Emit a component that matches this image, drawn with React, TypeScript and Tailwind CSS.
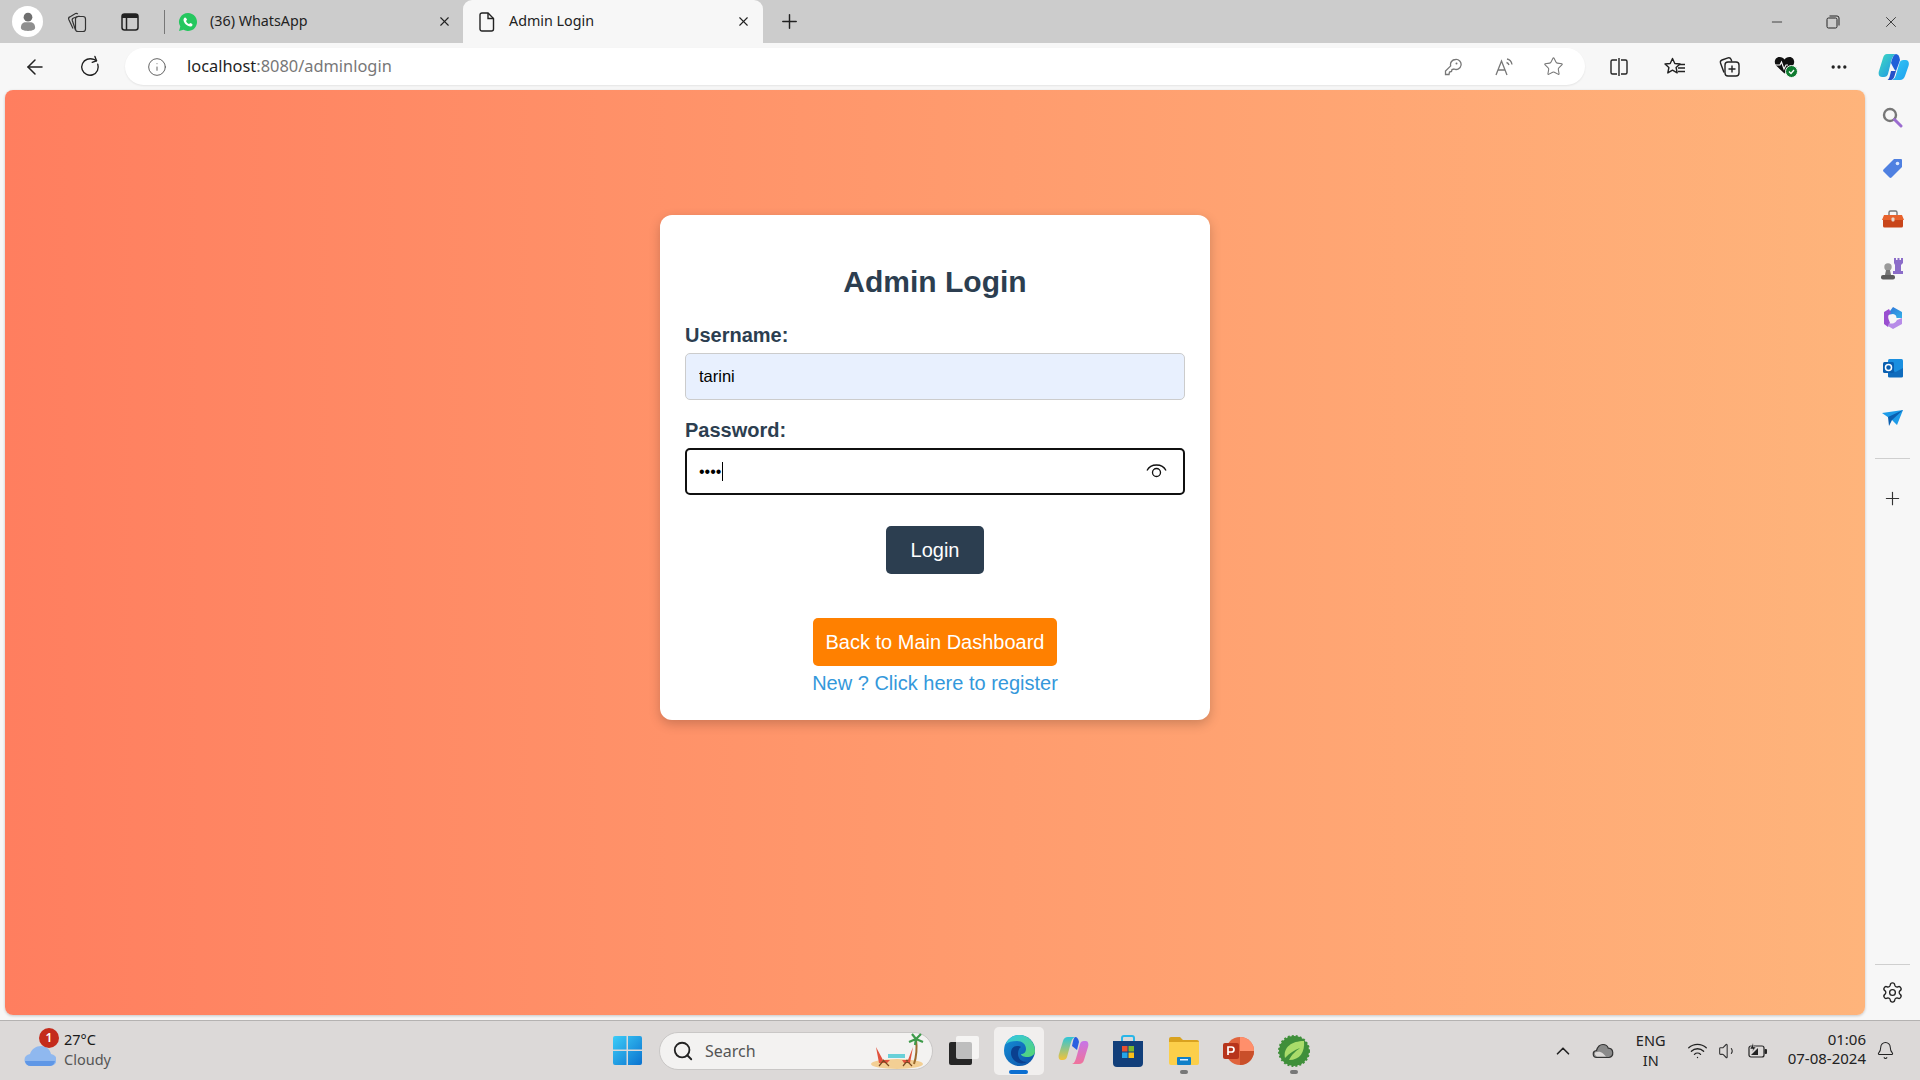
import React from "react";
import { ArrowLeft, RotateCw, Info, X, Plus, Minus, Star, Settings, Bell, ChevronUp, Search, Wifi, Volume1, MoreHorizontal } from "lucide-react";

const ui = "font-['Noto_Sans','Open_Sans',sans-serif]";

function Avatar() {
  return (
    <div className="w-[31px] h-[31px] rounded-full bg-white flex items-center justify-center">
      <svg width="16" height="19" viewBox="0 0 20 24">
        <circle cx="10" cy="6.500" r="5.500" fill="#6f6f6f" />
        <path d="M1 20c0-5 3-7 6-7h6c3 0 6 2 6 7 0 2-3 4-9 4s-9-2-9-4z" fill="#8f8f8f" />
      </svg>
    </div>
  );
}
function Workspaces() {
  return (
    <svg width="22" height="22" viewBox="0 0 22 22" fill="none" stroke="#333" strokeWidth="1.200">
      <rect x="9.500" y="5.500" width="10" height="15" rx="2.500" />
      <path d="M9.500 19L6.300 9.500a2 2 0 011.300-2.500L13.500 5" />
      <path d="M7 17.500L2.800 8.500a2 2 0 011-2.600L9.500 2.500a2 2 0 012.300.7" />
    </svg>
  );
}
function TabActions() {
  return (
    <svg width="20" height="20" viewBox="0 0 20 20" fill="none">
      <rect x="2" y="2" width="16" height="16" rx="2.500" stroke="#222" strokeWidth="1.500" />
      <path d="M2 4.500A2.500 2.500 0 014.500 2h11A2.500 2.500 0 0118 4.500V6H2z" fill="#222" />
      <path d="M6.500 6v12" stroke="#222" strokeWidth="1.500" />
    </svg>
  );
}
function WhatsApp() {
  return (
    <svg width="20" height="20" viewBox="0 0 20 20">
      <path d="M10 1a9 9 0 00-7.700 13.600L1 19l4.500-1.200A9 9 0 1010 1z" fill="#25c75f" />
      <path d="M7 5.500c-.5 0-1.500 1-1.500 2.300 0 3 3.500 6.700 6.800 6.700 1.300 0 2.300-1 2.300-1.800 0-.6-1.900-1.700-2.300-1.700-.4 0-.8 1-1.200 1-.9 0-3-2-3-3 0-.4.900-.8.900-1.200 0-.5-1-2.300-2-2.300z" fill="#fff" />
    </svg>
  );
}
function Doc() {
  return (
    <svg width="16" height="20" viewBox="0 0 16 20" fill="none" stroke="#222" strokeWidth="1.400">
      <path d="M3 1h6l5.500 5.500V17a2 2 0 01-2 2H3a2 2 0 01-2-2V3a2 2 0 012-2z" />
      <path d="M9 1v5.500h5.500" />
    </svg>
  );
}
function Restore() {
  return (
    <svg width="14" height="14" viewBox="0 0 14 14" fill="none" stroke="#222" strokeWidth="1">
      <rect x="1" y="3" width="10" height="10" rx="1.500" />
      <path d="M3.500 1H11a2 2 0 012 2v7.500" />
    </svg>
  );
}
function KeyIcon() {
  return (
    <svg width="18" height="18" viewBox="0 0 18 18" fill="none" stroke="#777" strokeWidth="1.300">
      <path d="M11.500 1.500a5 5 0 00-4.800 6.400L1.500 13v3.500H5l.5-2.500 2-.5.5-2 2-.5a5 5 0 101.500-9.500z" />
      <circle cx="12.500" cy="5.500" r="1" fill="#777" stroke="none" />
    </svg>
  );
}
function ReadAloud() {
  return (
    <svg width="20" height="18" viewBox="0 0 20 18" fill="none" stroke="#777" strokeWidth="1.300">
      <path d="M1 17L6.500 3 12 17M3 12h7" />
      <path d="M11.500 4.500c1.500.3 2 1 2.500 2.500M12 1c3 .5 4.500 2.500 5 5.500" />
    </svg>
  );
}
function SplitScreen() {
  return (
    <svg width="20" height="20" viewBox="0 0 20 20" fill="none" stroke="#222" strokeWidth="1.400">
      <path d="M8 3H3.500A1.500 1.500 0 002 4.500v11A1.500 1.500 0 003.500 17H8M12 3h4.500A1.500 1.500 0 0118 4.500v11a1.500 1.500 0 01-1.500 1.500H12M10 1v18" />
    </svg>
  );
}
function Favorites() {
  return (
    <svg width="22" height="20" viewBox="0 0 22 20" fill="none" stroke="#222" strokeWidth="1.400">
      <path d="M8.500 1.500l2.300 5 5.200.5-3.900 3.500 1.100 5.400-4.700-2.800-4.700 2.800 1.100-5.400L1 7l5.200-.5z" strokeLinejoin="round" />
      <path d="M15 7.500h6M14 11h7M14 14.500h7" />
    </svg>
  );
}
function Collections() {
  return (
    <svg width="21" height="21" viewBox="0 0 21 21" fill="none" stroke="#222" strokeWidth="1.400">
      <rect x="6" y="6" width="14" height="14" rx="3" />
      <path d="M13 9.500v7M9.500 13h7" />
      <path d="M5 16.500L1.500 7A2.500 2.500 0 013 4l6-2.200a2.500 2.500 0 013 1.500l.8 2.200" />
    </svg>
  );
}
function Health() {
  return (
    <svg width="24" height="23" viewBox="0 0 24 23">
      <path d="M10.500 18.500L2 10.500C-.5 7.500 1 2 5.500 2c2.500 0 4 1 5 2.500C11.500 3 13 2 15.500 2c4.500 0 6 5.500 3.500 8.500z" fill="#111" />
      <path d="M1 10h5l1.500-3 2.500 7 2-4h2" stroke="#fff" strokeWidth="1.100" fill="none" />
      <circle cx="17.500" cy="16.500" r="6" fill="#0f7b30" stroke="#f7f7f7" strokeWidth="1" />
      <path d="M15 16.500l2 2 3-3.500" stroke="#fff" strokeWidth="1.300" fill="none" />
    </svg>
  );
}
function CopilotLogo() {
  return (
    <svg width="31" height="26" viewBox="0 0 31 26">
      <defs>
        <linearGradient id="cpa" x1="0" y1="0" x2="1" y2="1">
          <stop offset="0" stopColor="#3fdcc0" />
          <stop offset="1" stopColor="#1f8fe8" />
        </linearGradient>
        <linearGradient id="cpb" x1="0" y1="0" x2="1" y2="1">
          <stop offset="0" stopColor="#36c8f5" />
          <stop offset="1" stopColor="#1fa0ee" />
        </linearGradient>
      </defs>
      <path d="M9 0h9c-3 1-4 4-5 8l-3 12c-.5 2-2 3-4 3H4c-3 0-4-3-3-6L5 4c.8-2.500 2-4 4-4z" fill="url(#cpa)" />
      <path d="M14 26h8c2.500 0 4-1.500 5-4l3.500-10c1-3 0-6-3-6h-2c-2 0-3.500 1-4 3l-3 10c-1 4-2 6-4.500 7z" fill="url(#cpb)" />
      <path d="M18 0c2 0 3.500 2 4 6l-1 3-3 8c-1 0-3-4-5-8 1-4 2-8 5-9z" fill="#1f5fd8" />
      <path d="M13 17l5 0-1.500 5c-.5 2-1.500 3-3 4h-4c2-1 2.500-5 3.500-9z" fill="#2450c8" />
    </svg>
  );
}

function TagIcon() {
  return (
    <svg width="20" height="20" viewBox="0 0 20 20">
      <path d="M11 1h7a1 1 0 011 1v7L8.500 19.500a1.500 1.500 0 01-2 0L.5 13.500a1.500 1.500 0 010-2z" fill="#4f80e1" />
      <circle cx="14.500" cy="5.500" r="1.800" fill="#dce8ff" />
    </svg>
  );
}
function Briefcase() {
  return (
    <svg width="22" height="18" viewBox="0 0 22 18">
      <path d="M7 5V2.500A1.500 1.500 0 018.500 1h5A1.500 1.500 0 0115 2.500V5" fill="none" stroke="#777" strokeWidth="1.400" />
      <path d="M2 5h18l2 5H0z" fill="#e8622c" />
      <path d="M1 10h20v6a1.500 1.500 0 01-1.500 1.500h-17A1.500 1.500 0 011 16z" fill="#c8451a" />
      <rect x="9.500" y="7.500" width="3" height="4" rx="1" fill="#e6d6cc" />
    </svg>
  );
}
function Chess() {
  return (
    <svg width="23" height="23" viewBox="0 0 23 23">
      <path d="M13 1h2v2h1.500V1h2v2H20V1h2v5l-2 2v6h2v3H12v-3h2V8l-1-2z" fill="#8b6cc9" />
      <circle cx="7" cy="10" r="3.700" fill="#9a9a9a" />
      <path d="M5 13h4l1 5H4z" fill="#777" />
      <rect x="0" y="18" width="14" height="4.500" rx="2" fill="#5c5c5c" />
    </svg>
  );
}
function M365() {
  return (
    <svg width="20" height="22" viewBox="0 0 20 22">
      <defs>
        <linearGradient id="ma" x1="0" y1="0" x2="1" y2="1">
          <stop offset="0" stopColor="#2f6fd8" />
          <stop offset="1" stopColor="#33b1e8" />
        </linearGradient>
      </defs>
      <path d="M10 0l9 5v6h-5.500A4 4 0 0010 7L4 8z" fill="url(#ma)" />
      <path d="M1 5l5-3 2 4a5 5 0 00-2.500 6L7 16l-2 4-4-3z" fill="#9a4fd0" />
      <path d="M6 16a6 6 0 008-3l5-2v6l-9 5-5-3z" fill="#b78ce8" />
    </svg>
  );
}
function Outlook() {
  return (
    <svg width="20" height="20" viewBox="0 0 20 20">
      <rect x="5" y="1" width="15" height="18" rx="1.500" fill="#1a8fe0" />
      <path d="M5 10l7.500 4L20 10v8a1.500 1.500 0 01-1.500 1.500h-12A1.500 1.500 0 015 18z" fill="#0f6cbd" />
      <rect x="0" y="4" width="11" height="11" rx="1.500" fill="#0a5fb0" />
      <circle cx="5.500" cy="9.500" r="3" fill="none" stroke="#fff" strokeWidth="1.500" />
    </svg>
  );
}
function Send() {
  return (
    <svg width="21" height="16" viewBox="0 0 21 16">
      <path d="M0 3l21-3-6 15-5-5z" fill="#1d9be8" />
      <path d="M6 7l15-7-11 10-3 6z" fill="#0b5fb0" />
    </svg>
  );
}
function Sidebar() {
  return (
    <div className="w-[55px] flex flex-col items-center">
      <div className="h-[14px]" />
      <div className="h-[26px] flex items-center justify-center pr-[2px]">
        <svg width="22" height="22" viewBox="0 0 22 22">
          <circle cx="9" cy="9" r="6" fill="none" stroke="#777" strokeWidth="2.400" />
          <path d="M13.500 13.500L20 20" stroke="#9b6ccf" strokeWidth="3" strokeLinecap="round" />
        </svg>
      </div>
      <div className="h-[25px]" />
      <div className="h-[26px] flex items-center justify-center"><TagIcon /></div>
      <div className="h-[25px]" />
      <div className="h-[26px] flex items-center justify-center"><Briefcase /></div>
      <div className="h-[23px]" />
      <div className="h-[26px] flex items-center justify-center"><Chess /></div>
      <div className="h-[24px]" />
      <div className="h-[26px] flex items-center justify-center"><M365 /></div>
      <div className="h-[24px]" />
      <div className="h-[26px] flex items-center justify-center"><Outlook /></div>
      <div className="h-[24px]" />
      <div className="h-[26px] flex items-center justify-center"><Send /></div>
      <div className="w-[35px] h-px bg-[#cfcfcf] mt-[27px]" />
      <div className="mt-[29px]"><Plus size={21} strokeWidth={1.300} color="#333" /></div>
      <div className="flex-1" />
      <div className="w-[35px] h-px bg-[#cfcfcf]" />
      <div className="mt-[16px] mb-[16px]"><Settings size={23} strokeWidth={1.400} color="#222" /></div>
    </div>
  );
}

function Card() {
  return (
    <div className="w-[550px] h-[505px] bg-white rounded-[12px] shadow-[0_4px_12px_rgba(0,0,0,0.2)] px-[25px] pt-[49px] font-['Liberation_Sans',Arial,sans-serif] flex flex-col items-stretch">
      <h2 className="text-[30px] leading-[36px] font-bold text-[#2c3e50] text-center">Admin Login</h2>
      <label className="mt-[24px] text-[20px] leading-[23px] font-bold text-[#2c3e50]">Username:</label>
      <input readOnly value="tarini" className="mt-[6px] h-[47px] w-full rounded-[5px] border border-[#cccccc] bg-[#e8f0fe] px-[13px] text-[16.500px] text-black outline-none" />
      <label className="mt-[19px] text-[20px] leading-[23px] font-bold text-[#2c3e50]">Password:</label>
      <div className="relative mt-[6px]">
        <input readOnly type="password" value="1234" className="h-[47px] w-full rounded-[5px] border-2 border-[#101010] bg-white px-[12px] text-[16px] text-black outline-none" />
        <span className="absolute left-[37px] top-[14px] w-px h-[19px] bg-black" />
        <svg className="absolute right-[18px] top-[15px]" width="21" height="17" viewBox="0 0 21 17" fill="none" stroke="#111" strokeWidth="1.300">
          <path d="M1 7.500C3 3.500 6.500 2 10.500 2s7.500 1.500 9.500 5.500" />
          <circle cx="10.500" cy="9.500" r="4" />
        </svg>
      </div>
      <button className="mt-[31px] self-center h-[48px] w-[98px] rounded-[5px] bg-[#2c3e50] text-white text-[20px]">Login</button>
      <button className="mt-[44px] self-center h-[48px] w-[244px] rounded-[5px] bg-[#ff8000] text-white text-[20px]">Back to Main Dashboard</button>
      <a className="mt-[3px] self-center text-[20px] leading-[29px] text-[#3498db]">New ? Click here to register</a>
    </div>
  );
}

function Windows() {
  return (
    <svg width="29" height="29" viewBox="0 0 29 29">
      <defs>
        <linearGradient id="wa" x1="0" y1="0" x2="1" y2="1">
          <stop offset="0" stopColor="#3ccdf8" />
          <stop offset="1" stopColor="#0b72cf" />
        </linearGradient>
      </defs>
      <path d="M0 2a2 2 0 012-2h11.500v13.500H0zM15 0h12a2 2 0 012 2v11.500H15zM0 15h13.500v14H2a2 2 0 01-2-2zM15 15h14v12a2 2 0 01-2 2H15z" fill="url(#wa)" />
    </svg>
  );
}
function Beach() {
  return (
    <svg width="56" height="36" viewBox="0 0 56 36">
      <ellipse cx="27" cy="31" rx="26" ry="5" fill="#f3cf94" />
      <path d="M44 31C47 22 47 14 46 6" stroke="#9c6b2f" strokeWidth="2" fill="none" />
      <path d="M46 6l-7 3M46 6l7 3M46 6l-4-5M46 6l5-5M46 6l-1 6" stroke="#3d9a4a" strokeWidth="2.200" />
      <rect x="18" y="21" width="17" height="4" fill="#68d0d8" />
      <path d="M6 14l7 13h7l-3 3H9z" fill="#e1523d" />
      <path d="M43 14l-5 13h-6l2 3h6z" fill="#e1523d" />
      <path d="M9 33l5-6M19 33l-6-6M33 33l5-6M42 33l-6-6" stroke="#7a4a22" strokeWidth="1.200" />
    </svg>
  );
}
function TaskView() {
  return (
    <div className="relative w-[29px] h-[29px]">
      <div className="absolute left-0 bottom-0 w-[23px] h-[23px] rounded-[2px] bg-[#262626]" />
      <div className="absolute left-[7px] top-0 w-[23px] h-[23px] rounded-[2px] bg-[#ffffff]/70" />
    </div>
  );
}
function EdgeLogo() {
  return (
    <svg width="31" height="31" viewBox="0 0 31 31">
      <defs>
        <linearGradient id="ea" x1="0" y1="0" x2="1" y2="1">
          <stop offset="0" stopColor="#31c7e8" />
          <stop offset="1" stopColor="#57d66f" />
        </linearGradient>
        <linearGradient id="eb" x1="0" y1="0" x2="1" y2="1">
          <stop offset="0" stopColor="#1590d8" />
          <stop offset="1" stopColor="#0d4ea5" />
        </linearGradient>
      </defs>
      <circle cx="15.500" cy="15.500" r="15.500" fill="url(#eb)" />
      <path d="M2 9C5 2 11 0 15.500 0 24 0 31 7 31 16c0 4-4 6-8 6-3 0-6-1-6-3 3 0 5-2 5-5 0-5-4-8-9-8C8 6 4 7 2 9z" fill="url(#ea)" />
      <path d="M13 11c-4 0-6 3-6 7 0 5 4 9 8 10 3 1 6 0 8-1-5 0-9-3-9-8 0-3 1-6 3-7-1-1-2-1-4-1z" fill="#0a3f8f" />
    </svg>
  );
}
function CopilotColor() {
  return (
    <svg width="31" height="31" viewBox="0 0 31 31">
      <defs>
        <linearGradient id="ca" x1="0" y1="0" x2="0" y2="1">
          <stop offset="0" stopColor="#2ec5d8" />
          <stop offset="1" stopColor="#f2c33a" />
        </linearGradient>
        <linearGradient id="cb" x1="0" y1="0" x2="0" y2="1">
          <stop offset="0" stopColor="#c675e8" />
          <stop offset="1" stopColor="#f0739a" />
        </linearGradient>
      </defs>
      <path d="M10 2h7c-3 1-3.500 4-5 9l-3 11c-.5 2-2 3-4 3H3c-2 0-3-3-2-6l4-13c.7-2.500 2.500-4 5-4z" fill="url(#ca)" />
      <path d="M21 29h-7c3-1 3.500-4 5-9l3-11c.5-2 2-3 4-3h2c2 0 3 3 2 6l-4 13c-.7 2.500-2.500 4-5 4z" fill="url(#cb)" />
      <path d="M17 2c2.500 0 3.500 2 4 5l-2 8-5-4c1-5 1.500-8 3-9z" fill="#2a5fe0" />
    </svg>
  );
}
function Store() {
  return (
    <svg width="30" height="32" viewBox="0 0 30 32">
      <path d="M9 6V3a2 2 0 012-2h8a2 2 0 012 2v3" fill="none" stroke="#29b6e8" strokeWidth="2" />
      <path d="M0 6h30v22a4 4 0 01-4 4H4a4 4 0 01-4-4z" fill="#123f7a" />
      <rect x="9" y="11" width="5.500" height="5.500" fill="#e8502f" />
      <rect x="15.500" y="11" width="5.500" height="5.500" fill="#7cb82f" />
      <rect x="9" y="17.500" width="5.500" height="5.500" fill="#25a5e8" />
      <rect x="15.500" y="17.500" width="5.500" height="5.500" fill="#fcc018" />
    </svg>
  );
}
function Explorer() {
  return (
    <svg width="30" height="28" viewBox="0 0 30 28">
      <path d="M0 2a2 2 0 012-2h9l3 3h14a2 2 0 012 2v4H0z" fill="#d9a21f" />
      <path d="M0 5h30v21a2 2 0 01-2 2H2a2 2 0 01-2-2z" fill="#fccf4a" />
      <rect x="8" y="20" width="14" height="8" rx="1" fill="#0f7fc8" />
      <rect x="11" y="22" width="8" height="1.500" fill="#dbeeff" />
    </svg>
  );
}
function PowerPoint() {
  return (
    <svg width="31" height="30" viewBox="0 0 31 30">
      <circle cx="17" cy="15" r="14" fill="#e0633c" />
      <path d="M17 1a14 14 0 0114 14H17z" fill="#ff8f6b" />
      <path d="M17 15h14a14 14 0 01-14 14z" fill="#c94f2a" />
      <rect x="0" y="7" width="16" height="16" rx="2" fill="#b7341b" />
      <path d="M5 19V11h3.500a2.500 2.500 0 010 5H5" fill="none" stroke="#fff" strokeWidth="1.700" />
    </svg>
  );
}
function Spring() {
  return (
    <svg width="32" height="32" viewBox="0 0 32 32">
      <circle cx="16" cy="16" r="15" fill="#3f8f3a" stroke="#3f8f3a" strokeWidth="2" strokeDasharray="2 2" />
      <path d="M7 23C5 12 14 6 26 6c1 11-4 19-15 19 3-6 7-9 11-12-6 2-10 5-15 10z" fill="#a9dc6a" />
    </svg>
  );
}
function OneDrive() {
  return (
    <svg width="22" height="16" viewBox="0 0 22 16">
      <path d="M5 14.500a3.500 3.500 0 01-.5-7C5.500 4 8 1.500 11 1.500c2.500 0 4.500 1.500 5.300 3.700a4.700 4.700 0 01.700 9.300z" fill="#8a8a8a" stroke="#333" strokeWidth="1.200" />
      <path d="M3 9.500c3-1.500 6-1 8 1l3 3H5a3.500 3.500 0 01-2-4z" fill="#dcd9d8" />
    </svg>
  );
}
function Battery() {
  return (
    <svg width="20" height="16" viewBox="0 0 20 16" fill="none">
      <rect x="1" y="3" width="15" height="11" rx="2" stroke="#222" strokeWidth="1.200" />
      <rect x="16.500" y="6" width="2.500" height="5" rx="1" fill="#222" />
      <path d="M3 12l7-7v7z" fill="#222" />
      <path d="M5 0L2 6h3L4 9l4-5H5.500z" fill="#222" stroke="#dcd9d8" strokeWidth=".5" />
    </svg>
  );
}

function TabStrip() {
  return (
    <div className={`h-[43px] bg-[#cccccc] flex items-center ${ui}`}>
      <div className="ml-[12px]"><Avatar /></div>
      <div className="ml-[23px]"><Workspaces /></div>
      <div className="ml-[32px]"><TabActions /></div>
      <div className="ml-[24px] w-px h-[24px] bg-[#777777]" />
      <div className="ml-[14px] w-[284px] flex items-center -translate-x-[1px]">
        <WhatsApp />
        <span className="ml-[12px] text-[14.300px] text-[#222222] whitespace-nowrap -mt-[2px]">(36) WhatsApp</span>
        <span className="ml-auto mr-[10px]"><X size={15} strokeWidth={1.800} color="#222" /></span>
      </div>
      <div className="w-[300px] h-full bg-[#f7f7f7] rounded-t-[9px] flex items-center pl-[16px]">
        <Doc />
        <span className="ml-[14px] text-[14.300px] text-[#222222] whitespace-nowrap -mt-[2px]">Admin Login</span>
        <span className="ml-auto mr-[12px]"><X size={15} strokeWidth={1.800} color="#222" /></span>
      </div>
      <div className="ml-[15px]"><Plus size={23} strokeWidth={1.500} color="#222" /></div>
      <div className="flex-1" />
      <Minus size={16} strokeWidth={1.200} color="#222" />
      <div className="ml-[41px]"><Restore /></div>
      <div className="ml-[42px] mr-[20px]"><X size={18} strokeWidth={1.100} color="#222" /></div>
    </div>
  );
}

function Toolbar() {
  return (
    <div className={`h-[47px] bg-[#f7f7f7] flex items-center ${ui}`}>
      <div className="ml-[23px]"><ArrowLeft size={24} strokeWidth={1.500} color="#222" /></div>
      <div className="ml-[32px]"><RotateCw size={22} strokeWidth={1.500} color="#222" style={{ transform: "rotate(-20deg)" }} /></div>
      <div className="ml-[24px] w-[1460px] h-[37px] rounded-full bg-white flex items-center shadow-[0_1px_2px_rgba(0,0,0,0.08)]">
        <div className="ml-[22px]"><Info size={20} strokeWidth={1.100} color="#555" /></div>
        <div className="ml-[20px] text-[16.400px] leading-none whitespace-nowrap">
          <span className="text-[#1f1f1f]">localhost</span>
          <span className="text-[#777777]">:8080/adminlogin</span>
        </div>
        <div className="flex-1" />
        <KeyIcon />
        <div className="ml-[33px]"><ReadAloud /></div>
        <div className="ml-[28px] mr-[21px]"><Star size={21} strokeWidth={1.200} color="#777" /></div>
      </div>
      <div className="ml-[24px]"><SplitScreen /></div>
      <div className="ml-[35px]"><Favorites /></div>
      <div className="ml-[33px]"><Collections /></div>
      <div className="ml-[34px]"><Health /></div>
      <div className="ml-[31px]"><MoreHorizontal size={20} strokeWidth={2} color="#222" /></div>
      <div className="ml-[29px]"><CopilotLogo /></div>
    </div>
  );
}

function Taskbar() {
  return (
    <div className={`h-[60px] bg-[#dcd9d8] border-t border-[#b4b2b1] flex items-center ${ui}`}>
      <div className="w-[494px] flex items-center">
        <div className="relative ml-[24px] w-[34px] h-[26px] mt-[6px]">
          <svg width="32" height="22" viewBox="0 0 32 22" className="absolute left-0 bottom-0">
            <path d="M7 21a6 6 0 01-1-12c1.500-5 6-8 11-8 5 0 9 3 10 8a6 6 0 01-1 12z" fill="#8fb8ef" />
            <path d="M1 16a6 6 0 006 5h19a6 6 0 005-5z" fill="#5f97e6" />
          </svg>
          <span className="absolute left-[15px] top-[-13px] w-[20px] h-[20px] rounded-full bg-[#c42b1c] text-white text-[12px] leading-[20px] text-center font-semibold">1</span>
        </div>
        <div className="ml-[6px] text-[14.500px] leading-[20px] -mt-[4px]">
          <div className="text-[#1a1a1a]">27°C</div>
          <div className="text-[#555555]">Cloudy</div>
        </div>
      </div>
      <div className="ml-[119px]"><Windows /></div>
      <div className="ml-[17px] w-[274px] h-[38px] rounded-full bg-[#f3f2f1] border border-[#c9c7c6] flex items-center pl-[12px] pr-[6px]">
        <Search size={22} strokeWidth={2} color="#222" />
        <span className="ml-[11px] text-[16px] text-[#555555]">Search</span>
        <div className="ml-auto"><Beach /></div>
      </div>
      <div className="ml-[16px]"><TaskView /></div>
      <div className="relative ml-[16px] w-[50px] h-[48px] rounded-[5px] bg-[#f1efee] flex items-center justify-center">
        <EdgeLogo />
        <span className="absolute bottom-[1px] left-[15px] w-[19px] h-[4px] rounded-full bg-[#0a6ed1]" />
      </div>
      <div className="ml-[14px]"><CopilotColor /></div>
      <div className="ml-[24px]"><Store /></div>
      <div className="relative ml-[26px]">
        <Explorer />
        <span className="absolute -bottom-[9px] left-[11px] w-[8px] h-[4px] rounded-full bg-[#777777]" />
      </div>
      <div className="ml-[24px]"><PowerPoint /></div>
      <div className="relative ml-[24px]">
        <Spring />
        <span className="absolute -bottom-[7px] left-[12px] w-[8px] h-[4px] rounded-full bg-[#777777]" />
      </div>
      <div className="flex-1" />
      <ChevronUp size={22} strokeWidth={1.800} color="#222" />
      <div className="ml-[18px]"><OneDrive /></div>
      <div className="ml-[14px] w-[46px] text-center text-[14.500px] leading-[20px] text-[#222222] -mt-[2px]">
        <div>ENG</div>
        <div>IN</div>
      </div>
      <div className="ml-[13px]"><Wifi size={21} strokeWidth={1.500} color="#222" /></div>
      <div className="ml-[10px]"><Volume1 size={20} strokeWidth={1.300} color="#333" /></div>
      <div className="ml-[10px]"><Battery /></div>
      <div className="ml-[20px] text-right text-[15px] leading-[19px] text-[#222222] whitespace-nowrap -mt-[3px]">
        <div>01:06</div>
        <div>07-08-2024</div>
      </div>
      <div className="ml-[10px] mr-[25px]"><Bell size={19} strokeWidth={1.300} color="#222" /></div>
    </div>
  );
}

export default function App() {
  return (
    <div className="w-screen h-screen overflow-hidden flex flex-col bg-[#f7f7f7]">
      <TabStrip />
      <Toolbar />
      <div className="flex-1 flex min-h-0">
        <div className="flex-1 ml-[5px] mb-[5px] rounded-[8px] bg-gradient-to-r from-[#ff7e5f] to-[#feb47b] shadow-[0_1px_3px_rgba(0,0,0,0.2)] flex justify-center items-start pt-[125px]">
          <Card />
        </div>
        <Sidebar />
      </div>
      <Taskbar />
    </div>
  );
}
